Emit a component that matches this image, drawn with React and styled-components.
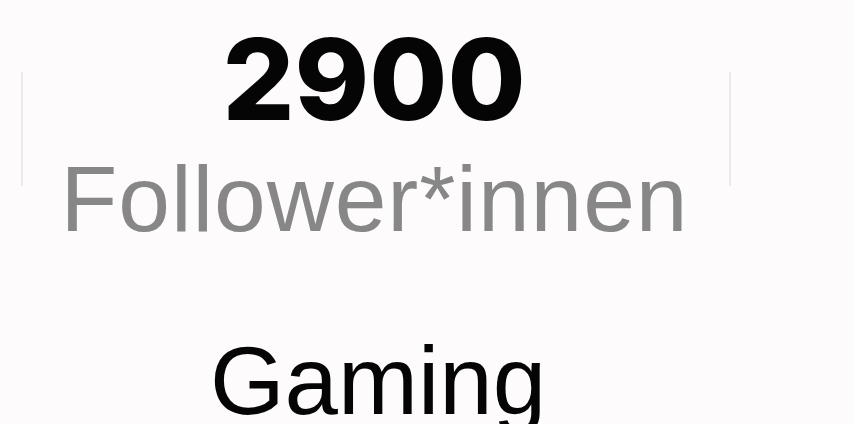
import React from "react";
import styled, { createGlobalStyle } from "styled-components";

const GlobalStyle = createGlobalStyle`
  html, body {
    margin: 0;
    padding: 0;
    background: #fdfbfc;
  }
  body {
    font-family: "Liberation Sans", Arial, sans-serif;
    overflow: hidden;
  }
`;

const Page = styled.div`
  width: 854px;
  height: 424px;
  display: flex;
  flex-direction: column;
  overflow: hidden;
`;

const StatsRow = styled.div`
  display: flex;
  align-items: center;
  padding-left: 21px;
  padding-top: 23px;
`;

const Divider = styled.div`
  width: 2px;
  height: 114px;
  background: #ebe9ea;
  align-self: flex-start;
  margin-top: 49px;
`;

const Stat = styled.div`
  width: 706px;
  display: flex;
  flex-direction: column;
  align-items: center;
`;

const Count = styled.div`
  font-family: Inter, "Liberation Sans", sans-serif;
  font-weight: 800;
  font-size: 113px;
  line-height: 1;
  color: #050505;
  margin-right: 4px;
`;

const Label = styled.div`
  font-size: 93px;
  line-height: 1;
  color: #878787;
  margin-top: 17px;
  margin-right: 3px;
  letter-spacing: 0.9px;
`;

const Category = styled.div`
  font-size: 96px;
  line-height: 1;
  color: #050505;
  margin-top: 87px;
  text-align: center;
  width: 756px;
`;

export default function App() {
  return (
    <>
      <GlobalStyle />
      <Page>
        <StatsRow>
          <Divider />
          <Stat>
            <Count>2900</Count>
            <Label>Follower*innen</Label>
          </Stat>
          <Divider />
        </StatsRow>
        <Category>Gaming</Category>
      </Page>
    </>
  );
}
